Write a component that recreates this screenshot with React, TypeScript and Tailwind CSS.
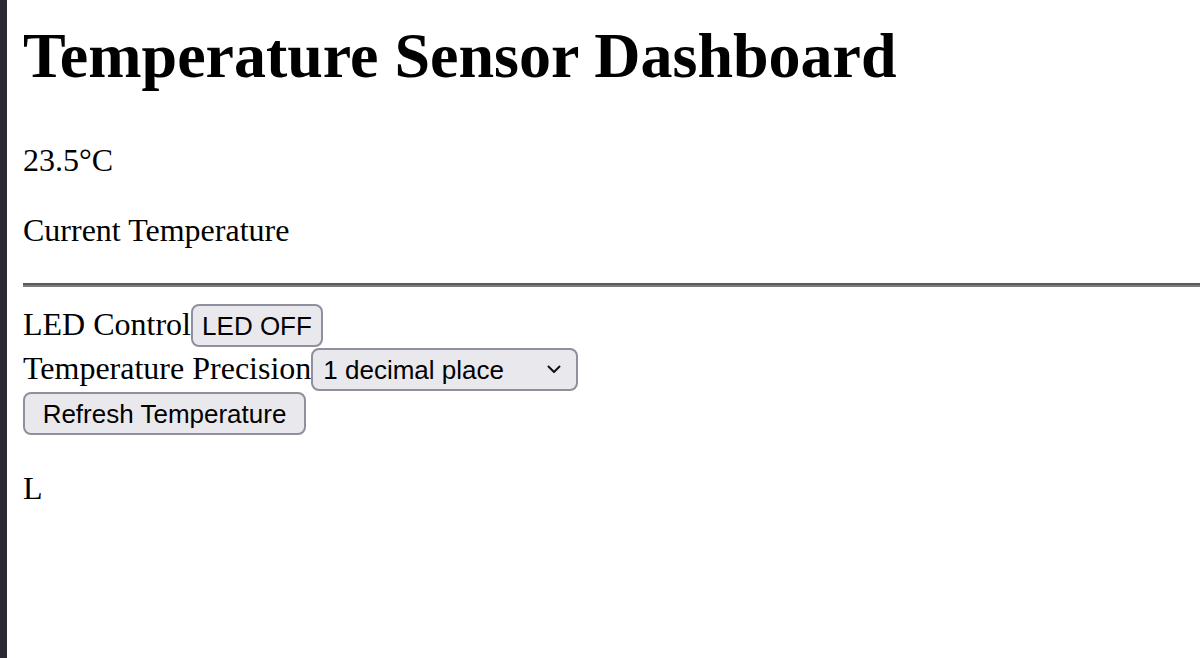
import React, { useState } from "react";

const serif = "font-['Liberation_Serif','Times_New_Roman',serif]";
const sans = "font-['Liberation_Sans',Arial,sans-serif]";

const btn =
  "h-[43px] pt-[5px] pb-[4px] text-[26px] leading-[30px] text-black bg-[#e9e9ed] border-2 border-[#8f8f9d] rounded-[8px]";

const App = () => {
  const [led, setLed] = useState(false);
  const [precision, setPrecision] = useState("1");

  return (
    <div className={`flex min-h-[658px] bg-white text-black ${serif}`}>
      <div className="w-[7px] shrink-0 bg-[#2a2931]" />
      <div className="flex-1 pl-[16px] pt-[19px]">
        <h1 className="text-[64px] font-bold leading-[74px]">Temperature Sensor Dashboard</h1>

        <p className="mt-[49px] text-[32px] leading-[37px]">23.5°C</p>
        <p className="mt-[33px] text-[32px] leading-[37px]">Current Temperature</p>

        <div className="mt-[34px] h-[4px] border-t-2 border-b-2 border-t-[#5a5a5a] border-b-[#7b7b7b]" />

        <div className="mt-[17px] flex h-[44px] items-baseline text-[32px] leading-[37px]">
          <span>LED Control</span>
          <button className={`${btn} ${sans} w-[132px] px-0`} onClick={() => setLed(!led)}>
            {led ? "LED ON" : "LED OFF"}
          </button>
        </div>

        <div className="flex h-[44px] items-baseline text-[32px] leading-[37px]">
          <span>Temperature Precision</span>
          <div className="relative">
            <select
              value={precision}
              onChange={(e) => setPrecision(e.target.value)}
              className={`${btn} ${sans} w-[267px] appearance-none pl-[10px] pr-[40px]`}
            >
              <option value="0">0 decimal places</option>
              <option value="1">1 decimal place</option>
              <option value="2">2 decimal places</option>
            </select>
            <svg
              className="pointer-events-none absolute right-[17px] top-[17px]"
              width="14"
              height="9"
              viewBox="0 0 14 9"
              fill="none"
            >
              <path d="M1.5 1.5 L7 7 L12.5 1.5" stroke="#111" strokeWidth="2" strokeLinecap="round" strokeLinejoin="round" />
            </svg>
          </div>
        </div>

        <div className="flex h-[44px] items-baseline">
          <button className={`${btn} ${sans} w-[283px] px-0`}>Refresh Temperature</button>
        </div>

        <p className="mt-[34px] text-[32px] leading-[37px]">L</p>
      </div>
    </div>
  );
};

export default App;
